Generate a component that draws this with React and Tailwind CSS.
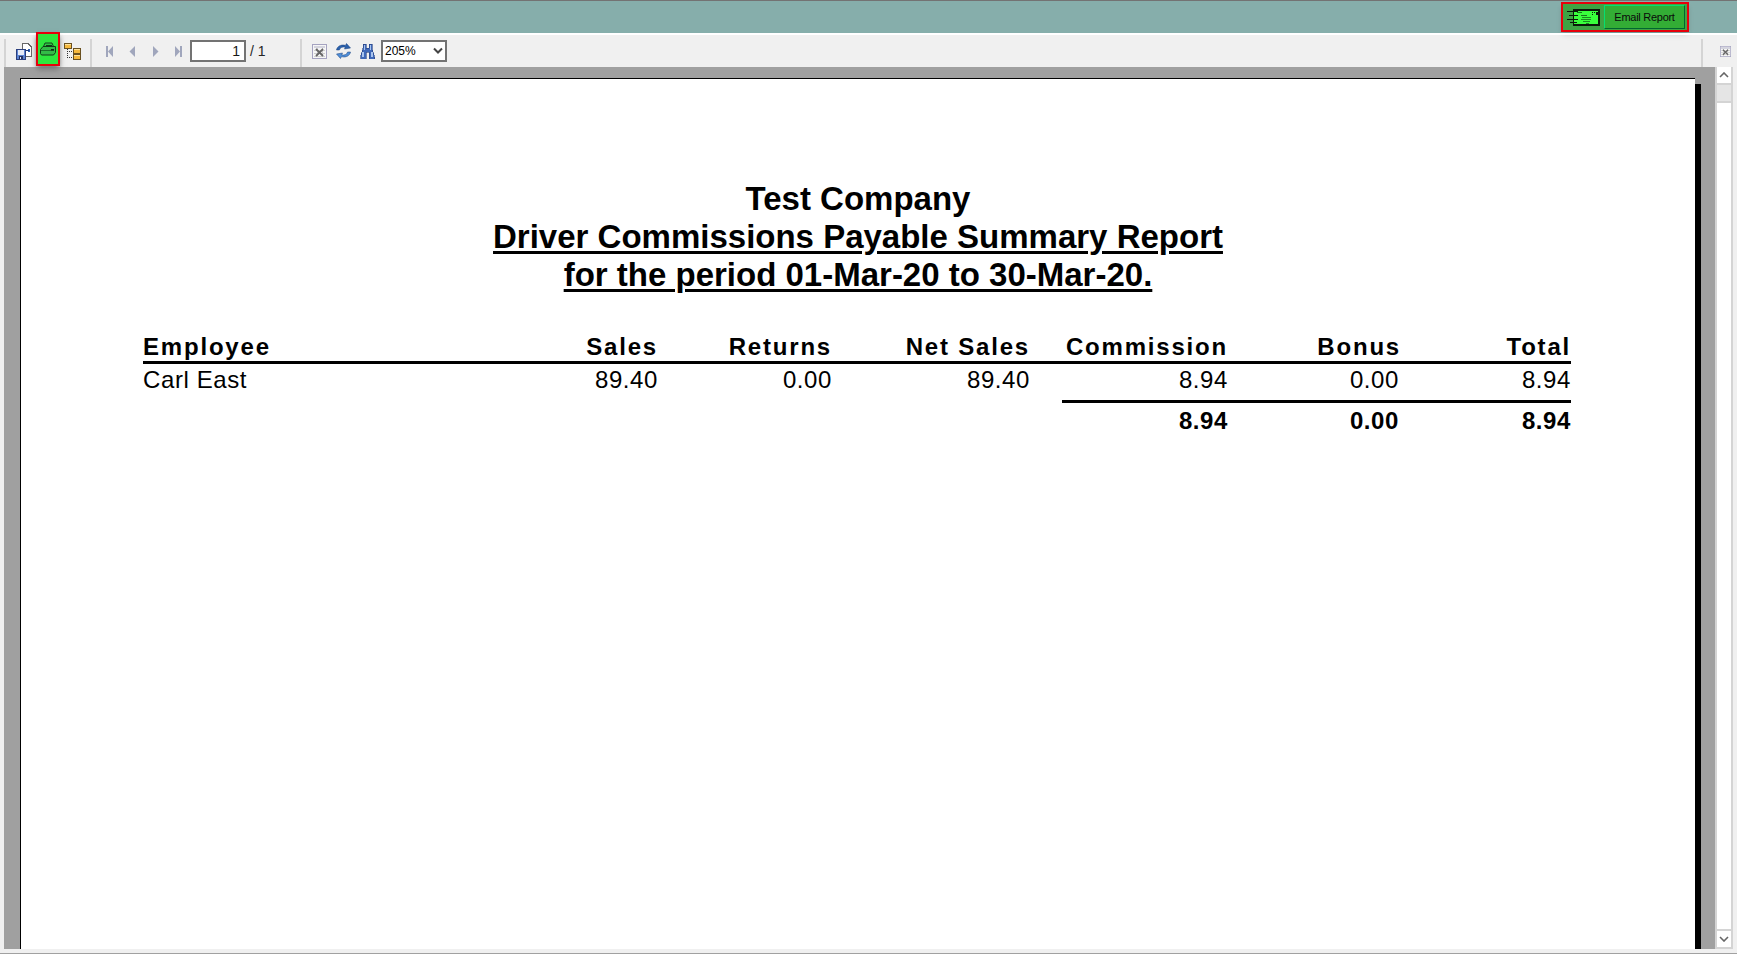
import React from "react";

const SaveIcon = () => (
  <svg width="16" height="17" viewBox="0 0 16 17" shapeRendering="crispEdges">
    <path d="M6.500 0.500h5.500l3.500 3.500v9H6.500z" fill="#fff" stroke="#666" />
    <path d="M12 6h2v3h-2z" fill="#2f5fb0" />
    <path d="M10 7h3v1h-3z" fill="#1c3a78" />
    <path d="M0.500 6.500h9v10h-9z" fill="#5a82d0" stroke="#2b3f7e" />
    <path d="M2 7h6v5H2z" fill="#e6ebf7" />
    <path d="M3 13h4v3H3z" fill="#223060" />
    <path d="M4 14h1v2H4z" fill="#e6ebf7" />
  </svg>
);

const PrintIcon = () => (
  <svg width="16" height="14" viewBox="0 0 16 14">
    <path d="M5 1h7l1.500 3.500H3.500z" fill="#2fc544" stroke="#17431f" />
    <path d="M6 3h6v1H6z" fill="#0f3a17" />
    <path d="M3 4.500h12.500v6L13.500 13H1.500L0.500 11.500v-4z" fill="#33bb47" stroke="#123a18" />
    <path d="M1 8.500h13" stroke="#1c6e2a" />
    <path d="M11 7h3v1.500h-3z" fill="#0f2a14" />
  </svg>
);

const TreeIcon = () => (
  <svg width="17" height="17" viewBox="0 0 17 17" shapeRendering="crispEdges">
    <path d="M3 6v8M3 8h6M3 14h6" stroke="#333" strokeDasharray="1 1" fill="none" />
    <path d="M0.500 0.500h7v5h-7z" fill="#f6b93e" stroke="#6a5120" />
    <path d="M1 1h6v1H1z" fill="#fde29c" />
    <path d="M9.500 5.500h7v5h-7z" fill="#f6b93e" stroke="#6a5120" />
    <path d="M10 6h6v1h-6z" fill="#fde29c" />
    <path d="M9.500 11.500h7v5h-7z" fill="#f6b93e" stroke="#6a5120" />
    <path d="M10 12h6v1h-6z" fill="#fde29c" />
  </svg>
);

const NavIcon = ({ dir, bar }) => (
  <svg width="7" height="11" viewBox="0 0 7 11">
    {dir === "left" ? (
      <>
        {bar && <path d="M0 0h2v11H0z" fill="#a0a6bc" />}
        <path d={bar ? "M7 0v11L2 5.500z" : "M6 0v11L0.500 5.500z"} fill="#a0a6bc" />
      </>
    ) : (
      <>
        {bar && <path d="M5 0h2v11H5z" fill="#a0a6bc" />}
        <path d={bar ? "M0 0v11l5-5.500z" : "M1 0v11l5.500-5.500z"} fill="#a0a6bc" />
      </>
    )}
  </svg>
);

const CloseBoxIcon = ({ size = 15 }) => (
  <svg width={size} height={size} viewBox="0 0 15 15" shapeRendering="crispEdges">
    <path d="M0.500 0.500h14v14h-14z" fill="#f6f6f6" stroke="#a5a3c0" />
    <path d="M2 2h11v2H2z" fill="#d4d4de" />
    <path d="M2 6h11M2 9h11M2 12h11M5 4v9M10 4v9" stroke="#cfcfcf" fill="none" />
    <path d="M4 5l7 7M11 5l-7 7" stroke="#666" strokeWidth="1.800" fill="none" shapeRendering="geometricPrecision" />
  </svg>
);

const RefreshIcon = () => (
  <svg width="17" height="16" viewBox="0 0 17 16">
    <path d="M1.500 7C2 3.500 6 1 10.500 2.400L11.500 0.500 15.500 5l-6 1 .8-1.800C7.500 3.400 5 4.600 4.400 7z" fill="#2c62ac" stroke="#173f7c" strokeWidth=".5" />
    <path d="M15.500 9c-.5 3.500-4.500 6-9 4.600L5.500 15.500 1.500 11l6-1-.8 1.800c2.800.8 5.300-.4 5.900-2.800z" fill="#4e8ed8" stroke="#173f7c" strokeWidth=".5" />
  </svg>
);

const BinocularsIcon = () => (
  <svg width="15" height="16" viewBox="0 0 15 16" shapeRendering="crispEdges">
    <path d="M3 1h3v4h3V1h3v4l2.500 9v2H9V9H6v7H0.500v-2L3 5z" fill="#3f68b8" stroke="#24407e" strokeWidth=".6" />
    <path d="M4 2h1v5H4zM10 2h1v5h-1zM2 9h2v5H2zM11 9h2v5h-2z" fill="#a9c4ee" />
  </svg>
);

const EnvelopeIcon = () => (
  <svg width="33" height="17" viewBox="0 0 33 17" shapeRendering="crispEdges">
    <path d="M6.500 1h25.500v15H6.500z" fill="#39ff3c" stroke="#0a1a0a" strokeWidth="1.400" />
    <path d="M0 2h11v1H0zM2 6h9v1H2zM0 10h11v1H0zM3 13h7v1H3z" fill="#0a1a0a" />
    <path d="M10 3h5v1h-5zM14 6h6v1h-6z" fill="#17761d" />
    <path d="M25 3h1v1h-1zM27 3h1v1h-1zM25 5h1v1h-1zM29 3h2v3h-2z" fill="#0a1a0a" />
    <path d="M15 8h9v1h-9zM14 10h10v1H14zM16 12h7v1h-7zM19 14h3v1h-3z" fill="#1c8a22" />
  </svg>
);

const Separator = () => <div className="mt-1 w-0.5 bg-neutral-300" />;

const cols = "grid grid-cols-[300px_215px_174px_198px_198px_173px_170px] text-right";

export default function App() {
  const font = { fontFamily: '"Liberation Sans", Arial, sans-serif' };
  return (
    <div style={font} className="flex h-screen w-full flex-col overflow-hidden bg-[#f0f0f0] text-black">
      {/* Title bar */}
      <div className="flex h-8.25 items-center justify-end border-t border-neutral-500 bg-[#86aeab] pr-12">
        <div className="flex h-7.5 w-32 items-center gap-1 border-2 border-red-600 bg-[#3ea343] pl-1 pr-0.5 shadow-md">
          <EnvelopeIcon />
          <button className="flex h-6 flex-1 items-center justify-center border border-t-green-400 border-r-green-800 border-b-green-800 border-l-green-400 bg-[#33ad35] text-[11px] tracking-tight text-neutral-950">
            Email Report
          </button>
        </div>
      </div>
      <div className="h-0.5 bg-white" />

      {/* Toolbar */}
      <div className="flex h-8 items-stretch pl-1 text-xs">
        <Separator />
        <div className="flex w-21 items-start pl-2.5">
          <div className="mt-2">
            <SaveIcon />
          </div>
          <div className="relative ml-1 -mt-0.75 flex h-8.5 w-6 items-center justify-center border-2 border-red-600 bg-[#2ee63e] shadow-md shadow-neutral-500">
            <PrintIcon />
          </div>
          <div className="ml-1 mt-2">
            <TreeIcon />
          </div>
        </div>
        <Separator />
        <div className="flex w-52 items-center pl-3.5">
          <div className="flex w-21 items-center gap-4">
            <NavIcon dir="left" bar />
            <NavIcon dir="left" />
            <NavIcon dir="right" />
            <NavIcon dir="right" bar />
          </div>
          <input
            readOnly
            value="1"
            className="h-5.5 w-14 border-2 border-neutral-500 bg-white pr-1 text-right text-sm text-neutral-900"
          />
          <span className="ml-1 text-sm text-neutral-800">/ 1</span>
        </div>
        <Separator />
        <div className="flex flex-1 items-center gap-2 pl-2.5">
          <CloseBoxIcon />
          <RefreshIcon />
          <BinocularsIcon />
          <div className="-ml-0.5 flex h-5.5 w-16.5 items-center justify-between border-2 border-neutral-500 bg-white px-0.5 text-xs">
            <span>205%</span>
            <svg width="10" height="8" viewBox="0 0 10 8" fill="none" stroke="#444" strokeWidth="2">
              <path d="M1 1.500l4 4 4-4" />
            </svg>
          </div>
        </div>
        <Separator />
        <div className="flex w-8.5 items-center justify-center pl-4 pr-1.5">
          <CloseBoxIcon size={11} />
        </div>
      </div>

      {/* Body */}
      <div className="flex min-h-0 flex-1 pb-1 pl-1 pr-1">
        <div className="flex min-w-0 flex-1 bg-[#a0a0a0] pl-4 pr-3.5 pt-2.75">
          <div className="min-w-0 flex-1 border-l border-t border-black bg-white pt-25.5">
            <div className="flex flex-col gap-0.5 text-center text-[33px] font-bold leading-9">
              <div>Test Company</div>
              <div>
                <span className="underline decoration-3 underline-offset-3">Driver Commissions Payable Summary Report</span>
              </div>
              <div>
                <span className="underline decoration-3 underline-offset-3">for the period 01-Mar-20 to 30-Mar-20.</span>
              </div>
            </div>

            <div className="ml-30.5 mt-10.5 w-fit text-2xl leading-6">
              <div className={`${cols} border-b-3 border-black pb-0.5 font-bold tracking-[0.075em]`}>
                <div className="text-left">Employee</div>
                <div>Sales</div>
                <div>Returns</div>
                <div>Net Sales</div>
                <div>Commission</div>
                <div>Bonus</div>
                <div>Total</div>
              </div>
              <div className={`${cols} pb-2 pt-1 tracking-wide`}>
                <div className="text-left">Carl East</div>
                <div>89.40</div>
                <div>0.00</div>
                <div>89.40</div>
                <div>8.94</div>
                <div className="pr-0.5">0.00</div>
                <div>8.94</div>
              </div>
              <div className={cols}>
                <div className="col-span-3 col-start-5 ml-8 border-b-3 border-black" />
              </div>
              <div className={`${cols} pt-1.5 font-bold tracking-wide`}>
                <div className="col-start-5">8.94</div>
                <div className="pr-0.5">0.00</div>
                <div>8.94</div>
              </div>
            </div>
          </div>
          <div className="mt-1.5 w-1.5 bg-black" />
        </div>

        {/* Scrollbar */}
        <div className="flex w-4.5 flex-col border-2 border-t-0 border-neutral-300 bg-white">
          <div className="flex h-4.5 items-center justify-center border-b-2 border-neutral-300">
            <svg width="10" height="6" viewBox="0 0 10 6" fill="none" stroke="#666" strokeWidth="1.600">
              <path d="M1 5l4-4 4 4" />
            </svg>
          </div>
          <div className="h-4.5 border-b-2 border-neutral-300 bg-neutral-200" />
          <div className="flex-1" />
          <div className="flex h-4.5 items-center justify-center border-t-2 border-neutral-300">
            <svg width="10" height="6" viewBox="0 0 10 6" fill="none" stroke="#666" strokeWidth="1.600">
              <path d="M1 1l4 4 4-4" />
            </svg>
          </div>
        </div>
      </div>
      <div className="h-px bg-neutral-400" />
    </div>
  );
}
